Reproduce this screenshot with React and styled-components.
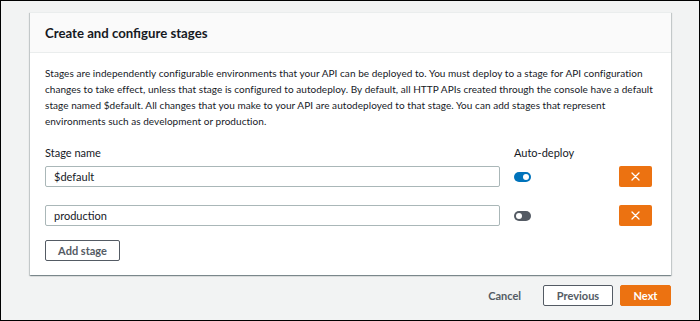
import React from "react";
import styled, { createGlobalStyle } from "styled-components";

const Global = createGlobalStyle`
  html, body { margin: 0; padding: 0; }
  body { font-family: Lato, "Liberation Sans", Arial, sans-serif; color: #16191f; }
  * { box-sizing: border-box; }
`;

const Page = styled.div`
  width: 700px;
  height: 321px;
  border: 1px solid #000;
  background: #f2f3f3;
  padding: 11px 28px 0 29px;
  display: flex;
  flex-direction: column;
`;

const Card = styled.section`
  background: #fff;
  box-shadow: 0 1px 1px 0 rgba(0, 28, 36, 0.3), 1px 1px 1px 0 rgba(0, 28, 36, 0.15),
    -1px 1px 1px 0 rgba(0, 28, 36, 0.15);
  border-top: 1px solid #eaeded;
`;

const CardHeader = styled.header`
  height: 40px;
  background: #fafafa;
  border-bottom: 1px solid #eaeded;
  display: flex;
  align-items: center;
  padding: 0 15px;
`;

const Title = styled.h2`
  margin: 0;
  font-size: 13.2px;
  font-weight: 700;
  color: #16191f;
`;

const CardBody = styled.div`
  padding: 12px 15px 14px 15px;
`;

const Description = styled.p`
  margin: 0;
  font-size: 10px;
  letter-spacing: 0.05px;
  line-height: 16px;
  color: #16191f;
`;

const StageGrid = styled.div`
  margin-top: 17px;
  display: grid;
  grid-template-columns: 455px 91px 33px;
  column-gap: 14px;
  align-items: center;
`;

const Label = styled.div`
  font-size: 11px;
  line-height: 14px;
  margin-bottom: 6px;
`;

const StageRow = styled.div`
  display: contents;
`;

const Cell = styled.div`
  margin-bottom: ${(p) => (p.$last ? "13px" : "18px")};
  display: flex;
  align-items: center;
`;

const Input = styled.input`
  width: 100%;
  height: 21px;
  border: 1px solid #aab7b8;
  border-radius: 2px;
  padding: 0 8px;
  font-family: inherit;
  font-size: 11px;
  color: #16191f;
  background: #fff;
  outline: none;
`;

const Toggle = styled.span`
  position: relative;
  display: inline-block;
  width: 17px;
  height: 10px;
  border-radius: 5px;
  background: ${(p) => (p.$on ? "#0073bb" : "#545b64")};
  &::after {
    content: "";
    position: absolute;
    top: 2px;
    left: ${(p) => (p.$on ? "9px" : "2px")};
    width: 6px;
    height: 6px;
    border-radius: 50%;
    background: #fff;
  }
`;

const DeleteButton = styled.button`
  width: 33px;
  height: 21px;
  border: none;
  border-radius: 2px;
  background: #ec7211;
  display: flex;
  align-items: center;
  justify-content: center;
  padding: 0;
`;

const Button = styled.button`
  height: 21px;
  width: ${(p) => p.$w}px;
  padding: 0;
  border-radius: 2px;
  font-family: inherit;
  font-size: 11px;
  font-weight: 700;
  white-space: nowrap;
  border: 1px solid ${(p) => (p.$primary ? "#ec7211" : "#545b64")};
  background: ${(p) => (p.$primary ? "#ec7211" : "#fff")};
  color: ${(p) => (p.$primary ? "#fff" : "#545b64")};
`;

const LinkButton = styled.button`
  background: none;
  border: none;
  padding: 0;
  font-family: inherit;
  font-size: 11px;
  font-weight: 700;
  color: #545b64;
  margin-right: 15px;
`;

const Footer = styled.footer`
  margin-top: 10px;
  display: flex;
  justify-content: flex-end;
  align-items: center;
  gap: 7px;
`;

const XIcon = () => (
  <svg width="9" height="9" viewBox="0 0 9 9">
    <path d="M1 1L8 8M8 1L1 8" stroke="#fff" strokeWidth="1.3" strokeLinecap="round" />
  </svg>
);

const stages = [
  { name: "$default", auto: true },
  { name: "production", auto: false },
];

export default function App() {
  return (
    <>
      <Global />
      <Page>
        <Card>
          <CardHeader>
            <Title>Create and configure stages</Title>
          </CardHeader>
          <CardBody>
            <Description>
              Stages are independently configurable environments that your API can be deployed to. You must
              deploy to a stage for API configuration changes to take effect, unless that stage is configured to
              autodeploy. By default, all HTTP APIs created through the console have a default stage named
              $default. All changes that you make to your API are autodeployed to that stage. You can add stages
              that represent environments such as development or production.
            </Description>
            <StageGrid>
              <Label>Stage name</Label>
              <Label>Auto-deploy</Label>
              <div />
              {stages.map((s, i) => (
                <StageRow key={s.name}>
                  <Cell $last={i === stages.length - 1}>
                    <Input defaultValue={s.name} />
                  </Cell>
                  <Cell $last={i === stages.length - 1}>
                    <Toggle $on={s.auto} />
                  </Cell>
                  <Cell $last={i === stages.length - 1}>
                    <DeleteButton aria-label="Remove stage">
                      <XIcon />
                    </DeleteButton>
                  </Cell>
                </StageRow>
              ))}
            </StageGrid>
            <Button $w={75}>Add stage</Button>
          </CardBody>
        </Card>
        <Footer>
          <LinkButton>Cancel</LinkButton>
          <Button $w={70}>Previous</Button>
          <Button $w={51} $primary>Next</Button>
        </Footer>
      </Page>
    </>
  );
}
